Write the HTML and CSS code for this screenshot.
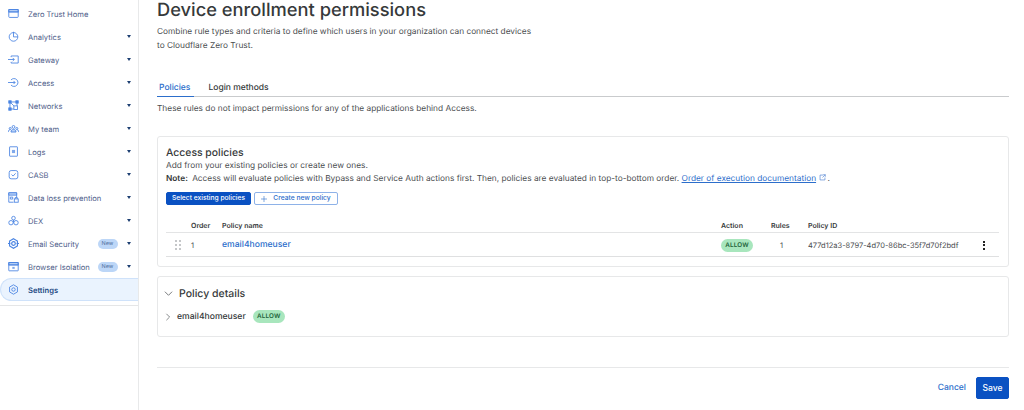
FILE: index.html
```html
<!DOCTYPE html>
<html lang="en">
<head>
<meta charset="utf-8">
<title>Device enrollment permissions</title>
<link rel="stylesheet" href="styles.css">
</head>
<body>
<div class="app">
  <nav class="side">
    <a class="item"><svg class="ic" viewBox="0 0 14 14"><rect class="tint" x="1" y="2" width="12" height="3"/><rect x="1" y="2" width="12" height="10" rx="1"/><path d="M1 5h12"/></svg><span class="lbl">Zero Trust Home</span></a>
    <a class="item"><svg class="ic" viewBox="0 0 14 14"><circle cx="7" cy="7.500" r="5.500"/><path d="M7 1v6.500h5.500"/></svg><span class="lbl">Analytics</span><i class="caret"></i></a>
    <a class="item"><svg class="ic" viewBox="0 0 14 14"><path d="M4 4V2.500h9v9H4V10"/><path d="M0 7h8M6 5l2 2-2 2"/></svg><span class="lbl">Gateway</span><i class="caret"></i></a>
    <a class="item"><svg class="ic" viewBox="0 0 14 14"><path d="M3.800 3.800a5 5 0 1 1 0 6.400"/><path d="M0 7h9M7 5l2 2-2 2"/></svg><span class="lbl">Access</span><i class="caret"></i></a>
    <a class="item"><svg class="ic" viewBox="0 0 14 14"><rect class="solid-ic" x="1" y="1" width="3" height="3"/><rect class="solid-ic" x="10" y="1" width="3" height="3"/><rect class="solid-ic" x="1" y="10" width="3" height="3"/><rect x="7.500" y="7.500" width="4.500" height="4.500"/><path d="M4 2.500h6M2.500 4v6M11.500 4v3.500M4 4l3.500 3.500M4 11.500h3.500"/></svg><span class="lbl">Networks</span><i class="caret"></i></a>
    <a class="item"><svg class="ic" viewBox="0 0 14 14"><circle cx="7" cy="5" r="1.800"/><circle cx="2.800" cy="7" r="1.300"/><circle cx="11.200" cy="7" r="1.300"/><path class="tint" d="M3.800 11.500c0-4.500 6.400-4.500 6.400 0z"/><path d="M.3 11.500c0-2 1-2.800 2.500-2.800M13.700 11.500c0-2-1-2.800-2.500-2.800"/></svg><span class="lbl">My team</span><i class="caret"></i></a>
    <a class="item"><svg class="ic" viewBox="0 0 14 14"><rect x="2" y="1" width="10" height="12" rx=".5"/><rect class="fill" x="5" y="5" width="4" height="4"/></svg><span class="lbl">Logs</span><i class="caret"></i></a>
    <a class="item"><svg class="ic" viewBox="0 0 14 14"><rect x="1.500" y="2" width="11" height="10.500" rx="2.500"/><path d="M4.500 7l2 2 3.200-3.500"/></svg><span class="lbl">CASB</span><i class="caret"></i></a>
    <a class="item"><svg class="ic" viewBox="0 0 14 14"><path d="M7 13H1V1h10v5.500"/><path class="tint" d="M1 1h10v3H1z"/><rect x="8" y="8.800" width="5" height="4.200"/><path d="M9.200 8.800V7h2.600v1.800M3 6.500h3v2.500H3z"/></svg><span class="lbl">Data loss prevention</span><i class="caret"></i></a>
    <a class="item"><svg class="ic" viewBox="0 0 14 14"><circle cx="7" cy="4" r="2.300"/><circle cx="3.800" cy="9.800" r="2.800"/><circle cx="10.200" cy="9.800" r="2.800"/><path d="M7 6.300v3.500"/></svg><span class="lbl">DEX</span><i class="caret"></i></a>
    <a class="item"><svg class="ic thick" viewBox="0 0 14 14"><path d="M7 1l5 2.900v6.200L7 13l-5-2.900V3.900z"/><circle cx="7" cy="7" r="2.300"/><path d="M0 7h3M11 7h3"/></svg><span class="lbl">Email Security</span><span class="new">New</span><i class="caret"></i></a>
    <a class="item"><svg class="ic" viewBox="0 0 14 14"><rect class="tint" x="1" y="2" width="12" height="3"/><rect x="1" y="2" width="12" height="10.500" rx=".5"/><path d="M1 5h12"/><rect class="fill" x="5.500" y="7.500" width="3" height="2.500"/></svg><span class="lbl">Browser Isolation</span><span class="new">New</span><i class="caret"></i></a>
    <a class="item active"><svg class="ic" viewBox="0 0 14 14"><path d="M7 1l5 2.900v6.200L7 13l-5-2.900V3.900z"/><circle cx="7" cy="7" r="2.200"/></svg><span class="lbl">Settings</span></a>
    <div class="side-rule"></div>
  </nav>

  <main class="main">
    <h1 class="title">Device enrollment permissions</h1>
    <p class="intro">Combine rule types and criteria to define which users in your organization can connect devices<br>to Cloudflare Zero Trust.</p>

    <div class="tabs">
      <span class="tab on">Policies</span>
      <span class="tab">Login methods</span>
    </div>
    <p class="tabnote">These rules do not impact permissions for any of the applications behind Access.</p>

    <section class="card access">
      <h2 class="card-h">Access policies</h2>
      <p class="line">Add from your existing policies or create new ones.</p>
      <p class="line"><b>Note:</b> Access will evaluate policies with Bypass and Service Auth actions first. Then, policies are evaluated in top-to-bottom order. <a class="doc">Order of execution documentation</a> <svg class="ext" viewBox="0 0 10 10"><path d="M6 1.500H1.500v7h7V5"/><path d="M6 1h3v3M9 1L5 5"/></svg>.</p>
      <div class="btns">
        <button class="btn solid">Select existing policies</button>
        <button class="btn outline"><svg class="plus" viewBox="0 0 10 10"><path d="M5 0v10M0 5h10"/></svg>Create new policy</button>
      </div>
      <div class="row head">
        <span class="c-drag"></span><span class="c-order">Order</span><span class="c-name">Policy name</span><span class="c-act">Action</span><span class="c-rules">Rules</span><span class="c-id">Policy ID</span><span class="c-menu"></span>
      </div>
      <div class="row body">
        <span class="c-drag"><span class="drag"><i></i><i></i><i></i><i></i><i></i><i></i></span></span>
        <span class="c-order">1</span>
        <a class="c-name pname">email4homeuser</a>
        <span class="c-act"><span class="pill">ALLOW</span></span>
        <span class="c-rules num">1</span>
        <span class="c-id pid">477d12a3-8797-4d70-86bc-35f7d70f2bdf</span>
        <span class="c-menu"><span class="kebab"><i></i><i></i><i></i></span></span>
      </div>
    </section>

    <section class="card details">
      <div class="det-head"><svg class="chev" viewBox="0 0 10 10"><path d="M1 3l4 4 4-4"/></svg><h2 class="det-h">Policy details</h2></div>
      <div class="det-row"><svg class="chev small" viewBox="0 0 10 10"><path d="M3 1l4 4-4 4"/></svg><span class="det-name">email4homeuser</span><span class="pill">ALLOW</span></div>
    </section>

    <footer class="foot">
      <a class="cancel">Cancel</a>
      <button class="save">Save</button>
    </footer>
  </main>
</div>
</body>
</html>
```
FILE: styles.css
```css
* { box-sizing: border-box; }
html, body { margin: 0; height: 410px; overflow: hidden; background: #fff; }
body { font-family: Inter, "Liberation Sans", sans-serif; color: #36393a; text-rendering: geometricPrecision; }
p, h1, h2 { margin: 0; }

.app { display: flex; height: 410px; }

.side { width: 139px; flex: none; border-right: 1px solid #e8e9ea; padding-top: 2px; }
.item { display: flex; align-items: center; height: 23px; padding: 0 7px 0 8px; font-size: 7.600px; color: #50608a; }
.ic { width: 11px; height: 11px; flex: none; margin-right: 9px; fill: none; stroke: #4a84e2; stroke-width: 1.100; }
.ic.thick { stroke-width: 1.500; }
.ic .fill { fill: #4a84e2; stroke: none; opacity: .7; }
.ic .tint { fill: #bcd4f7; }
.ic .solid-ic { fill: #4a84e2; }
.lbl { flex: 1; white-space: nowrap; padding-top: 2px; }
.caret { width: 0; height: 0; margin-left: 9.500px; border-left: 2.500px solid transparent; border-right: 2.500px solid transparent; border-top: 3px solid #1d3f72; }
.new { background: #bcd6f7; color: #52709e; border-radius: 6px; font-size: 5.500px; width: 20px; height: 10px; line-height: 10px; text-align: center; }
.item.active { background: #eaf3fe; border: 1px solid #cfe2fa; border-right: 0; border-radius: 12px 0 0 12px; padding-left: 7px; color: #234a84; font-weight: 600; }
.side-rule { height: 1px; background: #e5e6e7; margin-top: 4px; }

.main { flex: 1; min-width: 0; padding: 0 15px 0 18px; }
.title { font-size: 18.300px; font-weight: 500; line-height: 20px; color: #36393a; }
.intro { font-size: 8.320px; line-height: 14px; margin-top: 5px; color: #4a4d4f; }

.tabs { display: flex; margin-top: 27px; border-bottom: 1px solid #c9cbcd; height: 17px; font-size: 8.500px; font-weight: 500; }
.tab { padding: 0 4px 0 2px; margin-right: 12px; line-height: 17px; height: 17px; color: #36393a; }
.tab.on { color: #2c6ecb; border-bottom: 1px solid #2c6ecb; }
.tabnote { font-size: 8.320px; line-height: 12px; margin-top: 6px; color: #4a4d4f; }

.card { border: 1px solid #e7e8e9; border-radius: 3px; }
.access { margin-top: 21px; height: 131px; padding: 9px 9px 0 8px; }
.card-h { font-size: 10.400px; font-weight: 500; line-height: 14px; color: #36393a; }
.line { font-size: 8.320px; line-height: 13px; color: #4a4d4f; }
.line b { font-weight: 600; color: #36393a; margin-right: 2px; }
.doc { color: #2c6ecb; text-decoration: underline; }
.ext { width: 7px; height: 7px; margin: 0 1px; fill: none; stroke: #5a89d6; stroke-width: 1; }

.btns { display: flex; gap: 3px; margin-top: 6px; }
.btn { height: 13px; border-radius: 2px; font: 500 6.700px/1 Inter, "Liberation Sans", sans-serif; padding: 0; display: flex; align-items: center; justify-content: center; }
.solid { width: 85px; background: #0a51c2; border: 1px solid #0a51c2; color: #fff; }
.outline { width: 84px; background: #fff; border: 1px solid #8eb2e8; color: #2c6ecb; }
.plus { width: 6px; height: 6px; margin-right: 6px; fill: none; stroke: #2c6ecb; stroke-width: 1; }

.row { display: flex; align-items: center; }
.head { margin-top: 15px; height: 13px; border-bottom: 1px solid #e3e4e5; font-size: 7px; font-weight: 600; color: #36393a; padding-bottom: 1px; }
.body { height: 24px; border-bottom: 1px solid #dfe0e1; font-size: 7.500px; color: #4a4d4f; padding-top: 1px; }
.c-drag { width: 25px; flex: none; display: flex; padding-left: 9px; }
.c-order { width: 31px; flex: none; }
.c-name { width: 499px; flex: none; }
.c-act { width: 50px; flex: none; display: flex; }
.c-rules { width: 37px; flex: none; }
.num { padding-left: 9px; }
.c-id { width: 167px; flex: none; }
.c-menu { flex: 1; display: flex; justify-content: flex-end; padding-right: 14px; }
.pname { color: #2c6ecb; font-size: 8.600px; font-weight: 500; }
.pid { font-size: 7.500px; }
.drag { display: grid; grid-template-columns: 1px 1px; gap: 2.500px 3px; }
.drag i { width: 1.500px; height: 1.500px; background: #c5c7c9; }
.kebab { display: flex; flex-direction: column; gap: 1.500px; }
.kebab i { width: 2px; height: 2px; background: #222; }

.pill { display: inline-block; background: #a8e6bd; color: #22633a; border-radius: 7px; font-size: 6.300px; font-weight: 600; height: 13px; line-height: 13px; width: 32px; text-align: center; letter-spacing: .2px; }

.details { margin-top: 9px; height: 61px; padding: 0 6px; }
.det-head { display: flex; align-items: center; height: 32px; }
.det-h { font-size: 10.500px; font-weight: 500; color: #36393a; margin-left: 6px; }
.chev { width: 9px; height: 9px; fill: none; stroke: #6b6e70; stroke-width: 1; flex: none; }
.chev.small { width: 8px; height: 8px; }
.det-row { display: flex; align-items: center; height: 13px; margin-top: 1px; }
.det-name { font-size: 8.600px; font-weight: 500; margin: 0 7px 0 5px; color: #36393a; }

.foot { margin-top: 30px; border-top: 1px solid #e7e8e9; display: flex; justify-content: flex-end; align-items: center; padding-top: 9px; gap: 10px; }
.cancel { color: #2c6ecb; font-size: 8.500px; font-weight: 500; }
.save { width: 33px; height: 22px; background: #0a51c2; border: 1px solid #0a51c2; border-radius: 2px; color: #fff; font: 500 8.500px/1 Inter, "Liberation Sans", sans-serif; padding: 0; }
```
